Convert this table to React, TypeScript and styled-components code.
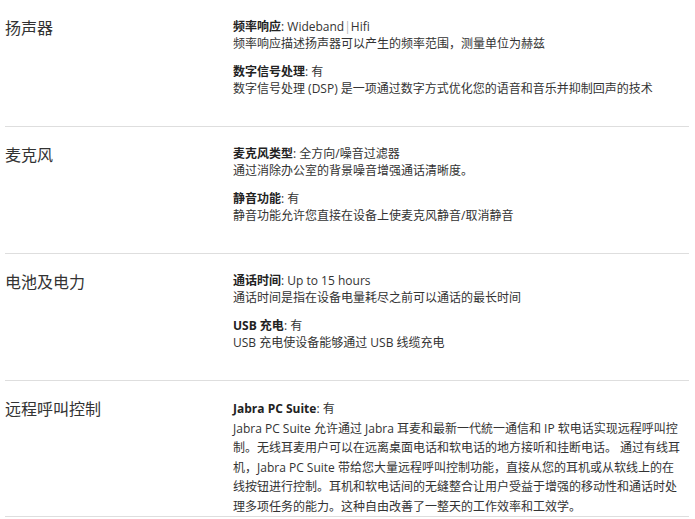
import React from "react";
import styled, { createGlobalStyle } from "styled-components";

const Global = createGlobalStyle`
  html, body { margin: 0; padding: 0; background: #ffffff; }
  body {
    font-family: "Segoe UI", "Open Sans", "Noto Sans CJK SC", sans-serif;
    color: #333333;
  }
`;

const Page = styled.div`
  padding: 0 6px 0 5px;
  width: 695px;
  box-sizing: border-box;
`;

const Section = styled.section`
  display: grid;
  grid-template-columns: 228px 1fr;
  box-sizing: border-box;
  min-height: 127px;
  padding-top: 18px;
  border-bottom: 1px solid #dedede;
`;

const Label = styled.h3`
  margin: 0;
  font-size: 16px;
  line-height: 20px;
  font-weight: 400;
  color: #333333;
  font-family: "Segoe UI", "Open Sans", "Noto Sans CJK SC", sans-serif;
`;

const Items = styled.div`
  display: flex;
  flex-direction: column;
  gap: 11px;
`;

const Item = styled.div<{ $lh: number }>`
  font-size: 12px;
  line-height: ${(p) => p.$lh}px;
  color: #333333;
  white-space: nowrap;
`;

const Title = styled.div``;

const Key = styled.strong`
  font-weight: 700;
  color: #222222;
`;

const Sep = styled.span`
  color: #b8b8b8;
`;

const Desc = styled.div``;

type Spec = { key: string; value: React.ReactNode; desc: React.ReactNode };

const sections: { label: string; lh: number; items: Spec[] }[] = [
  {
    label: "扬声器",
    lh: 17,
    items: [
      {
        key: "频率响应",
        value: (
          <>
            Wideband<Sep>|</Sep>Hifi
          </>
        ),
        desc: "频率响应描述扬声器可以产生的频率范围，测量单位为赫兹",
      },
      {
        key: "数字信号处理",
        value: "有",
        desc: "数字信号处理 (DSP) 是一项通过数字方式优化您的语音和音乐并抑制回声的技术",
      },
    ],
  },
  {
    label: "麦克风",
    lh: 17,
    items: [
      {
        key: "麦克风类型",
        value: "全方向/噪音过滤器",
        desc: "通过消除办公室的背景噪音增强通话清晰度。",
      },
      {
        key: "静音功能",
        value: "有",
        desc: "静音功能允许您直接在设备上使麦克风静音/取消静音",
      },
    ],
  },
  {
    label: "电池及电力",
    lh: 17,
    items: [
      {
        key: "通话时间",
        value: "Up to 15 hours",
        desc: "通话时间是指在设备电量耗尽之前可以通话的最长时间",
      },
      {
        key: "USB 充电",
        value: "有",
        desc: "USB 充电使设备能够通过 USB 线缆充电",
      },
    ],
  },
  {
    label: "远程呼叫控制",
    lh: 19.5,
    items: [
      {
        key: "Jabra PC Suite",
        value: "有",
        desc: (
          <>
            Jabra PC Suite 允许通过 Jabra 耳麦和最新一代統一通信和 IP 软电话实现远程呼叫控
            <br />
            制。无线耳麦用户可以在远离桌面电话和软电话的地方接听和挂断电话。 通过有线耳
            <br />
            机，Jabra PC Suite 带给您大量远程呼叫控制功能，直接从您的耳机或从软线上的在
            <br />
            线按钮进行控制。耳机和软电话间的无缝整合让用户受益于增强的移动性和通话时处
            <br />
            理多项任务的能力。这种自由改善了一整天的工作效率和工效学。
          </>
        ),
      },
    ],
  },
];

export default function App() {
  return (
    <>
      <Global />
      <Page>
        {sections.map((s) => (
          <Section key={s.label}>
            <Label>{s.label}</Label>
            <Items>
              {s.items.map((it) => (
                <Item key={it.key} $lh={s.lh}>
                  <Title>
                    <Key>{it.key}</Key>: {it.value}
                  </Title>
                  <Desc>{it.desc}</Desc>
                </Item>
              ))}
            </Items>
          </Section>
        ))}
      </Page>
    </>
  );
}
